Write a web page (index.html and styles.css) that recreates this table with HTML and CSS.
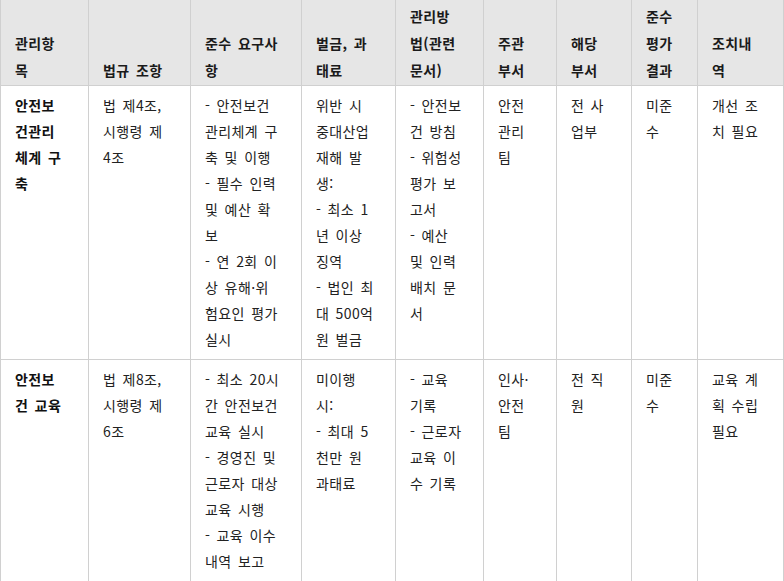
FILE: index.html
```html
<!DOCTYPE html>
<html lang="ko">
<head>
<meta charset="utf-8">
<link rel="stylesheet" href="styles.css">
</head>
<body>
<table class="grid">
  <colgroup>
    <col class="c1"><col class="c2"><col class="c3"><col class="c4"><col class="c5"><col class="c6"><col class="c7"><col class="c8"><col class="c9">
  </colgroup>
  <thead>
    <tr class="head">
      <th>관리항<br>목</th>
      <th>법규 조항</th>
      <th>준수 요구사<br>항</th>
      <th>벌금, 과<br>태료</th>
      <th>관리방<br>법(관련<br>문서)</th>
      <th>주관<br>부서</th>
      <th>해당<br>부서</th>
      <th>준수<br>평가<br>결과</th>
      <th>조치내<br>역</th>
    </tr>
  </thead>
  <tbody>
    <tr class="row1">
      <td class="item">안전보<br>건관리<br>체계 구<br>축</td>
      <td>법 제4조,<br>시행령 제<br>4조</td>
      <td>- 안전보건<br>관리체계 구<br>축 및 이행<br>- 필수 인력<br>및 예산 확<br>보<br>- 연 2회 이<br>상 유해·위<br>험요인 평가<br>실시</td>
      <td>위반 시<br>중대산업<br>재해 발<br>생:<br>- 최소 1<br>년 이상<br>징역<br>- 법인 최<br>대 500억<br>원 벌금</td>
      <td>- 안전보<br>건 방침<br>- 위험성<br>평가 보<br>고서<br>- 예산<br>및 인력<br>배치 문<br>서</td>
      <td>안전<br>관리<br>팀</td>
      <td>전 사<br>업부</td>
      <td>미준<br>수</td>
      <td>개선 조<br>치 필요</td>
    </tr>
    <tr class="row2">
      <td class="item">안전보<br>건 교육</td>
      <td>법 제8조,<br>시행령 제<br>6조</td>
      <td>- 최소 20시<br>간 안전보건<br>교육 실시<br>- 경영진 및<br>근로자 대상<br>교육 시행<br>- 교육 이수<br>내역 보고</td>
      <td>미이행<br>시:<br>- 최대 5<br>천만 원<br>과태료</td>
      <td>- 교육<br>기록<br>- 근로자<br>교육 이<br>수 기록</td>
      <td>인사·<br>안전<br>팀</td>
      <td>전 직<br>원</td>
      <td>미준<br>수</td>
      <td>교육 계<br>획 수립<br>필요</td>
    </tr>
  </tbody>
</table>
</body>
</html>
```

FILE: styles.css
```css
html, body {
  margin: 0;
  padding: 0;
  background: #ffffff;
}

body {
  font-family: "Noto Sans CJK KR", "Noto Sans", sans-serif;
  font-size: 14px;
  color: #222222;
}

.grid {
  border-collapse: collapse;
  table-layout: fixed;
  width: 783px;
  margin-top: -1px;
}

.c1 { width: 88px; }
.c2 { width: 102px; }
.c3 { width: 111px; }
.c4 { width: 94px; }
.c5 { width: 88px; }
.c6 { width: 73px; }
.c7 { width: 75px; }
.c8 { width: 66px; }
.c9 { width: 86px; }

.grid th,
.grid td {
  border: 1px solid #d0d0d0;
  text-align: left;
  white-space: nowrap;
  overflow: hidden;
  letter-spacing: 0.4px;
  word-spacing: 2px;
}

.head { height: 86px; }
.row1 { height: 274px; }
.row2 { height: 221px; }

.grid th {
  background: #e6e6e6;
  font-weight: 700;
  color: #1a1a1a;
  line-height: 27px;
  padding: 0 14px 1px 14px;
  vertical-align: bottom;
}

.grid td {
  line-height: 26px;
  padding: 6px 14px 7px 14px;
  vertical-align: top;
}

.grid td.item {
  font-weight: 700;
  color: #111111;
}
```
